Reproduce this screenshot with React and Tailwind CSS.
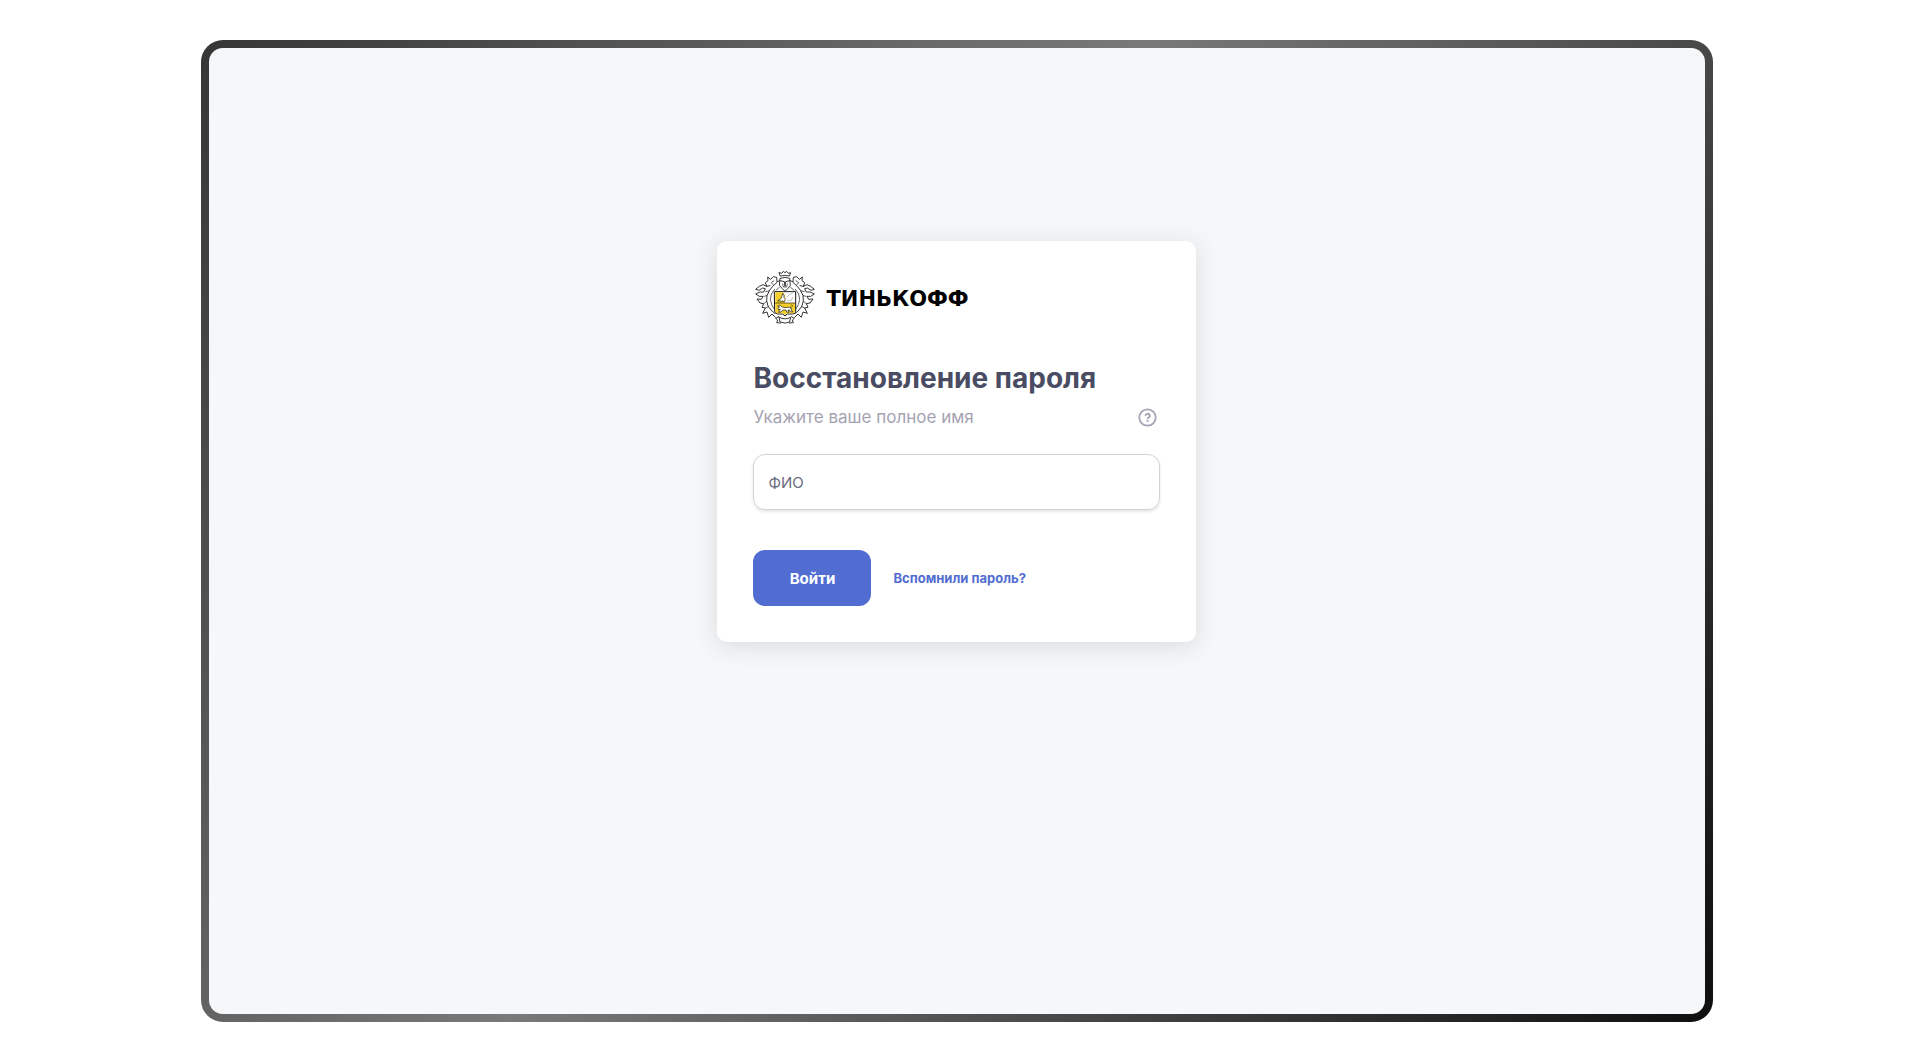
const Crest = () => (
  <svg
    viewBox="45 30 183 162"
    className="h-[54px] w-[61px]"
    fill="none"
    stroke="#161616"
    strokeWidth="2.6"
    strokeLinejoin="round"
    strokeLinecap="round"
    aria-hidden="true"
  >
    <defs>
      {/* left half of the mantling, mirrored for the right half */}
      <g id="mantling">
        <path d="M118 62 111 66 110 52 100 50 92 58 83 51 84 62 76 68 80 79 90 77" />
        <path d="M80 79 69 74 58 79 47 88 57 91 68 84 76 86 71 96 60 96 47 102 58 109 69 109 64 118 51 117 60 129 71 131 66 142 76 144 68 160 81 156 86 172 96 162 106 172" />
        <path d="M110 68 98 79 88 92 81 107 80 122 84 138 93 150 104 160" />
        <path d="M102 62 94 68 99 74M104 88 94 102 91 118 95 134 102 146" strokeWidth="2" />
        <path d="M80 107 72 109M80 124 71 131M85 140 76 144M88 92 77 95" strokeWidth="2" />
      </g>
    </defs>
    <use href="#mantling" />
    <use href="#mantling" transform="matrix(-1 0 0 1 270 0)" />
    {/* crown */}
    <path d="M118 38 125 40 130 34 135 38 140 34 145 40 152 38 148 48 Q135 44 122 48Z" fill="#fff" />
    {/* helmet */}
    <path d="M121 55 Q135 49 149 55 L151 77 143 86 135 94 127 86 119 77Z" fill="#fff" />
    <path d="M121 62 133 65 135 79 137 65 149 62" />
    <path d="M128 72 130 81 140 81 142 72M118 82 108 91M152 82 162 91" strokeWidth="2" />
    {/* shield */}
    <path
      d="M104 95H167V154Q167 162 158 162H142L135 168 128 162H113Q104 162 104 154Z"
      fill="#fff"
      strokeWidth="3"
    />
    <path d="M106 97H128L135 105V129H106Z" fill="#f5d02c" stroke="none" />
    <path d="M106 129H165V153Q165 160 157 160H141L135 165 129 160H114Q106 160 106 153Z" fill="#f5d02c" stroke="none" />
    <path d="M106 129H165" strokeWidth="2" />
    <path d="M114 122 122 117 126 108 128 100 132 106 132 113 136 117 134 123Z" fill="#fff" strokeWidth="2" />
    <path d="M140 112 149 103 156 101M142 122 154 121 158 112" stroke="#9a9a9a" strokeWidth="1.8" />
    {/* lion in the lower field */}
    <path
      d="M114 138 120 135 126 141 138 143 147 141 153 144 154 150 158 156 151 155 148 150 144 150 147 157 140 156 138 150 129 150 123 156 116 157 119 152 121 147 115 150 114 145 118 142Z"
      fill="#fff"
      strokeWidth="2"
    />
    <path d="M152 143 158 138 154 134" strokeWidth="2" />
    {/* ribbon */}
    <path d="M116 170 107 175 113 180 110 188 122 189" fill="#fff" />
    <path d="M154 170 163 175 157 180 160 188 148 189" fill="#fff" />
    <path d="M118 172Q135 181 152 172L149 186Q135 193 121 186Z" fill="#fff" />
  </svg>
);

const HelpIcon = () => (
  <svg viewBox="0 0 22 22" className="h-[22px] w-[22px]" fill="none" stroke="currentColor" aria-hidden="true">
    <circle cx="11.5" cy="11.5" r="8.2" strokeWidth="1.8" />
    <path d="M9.4 9.8a2.2 2 0 1 1 3.3 1.7c-.8.45-1.1.8-1.1 1.5" strokeWidth="1.8" />
    <circle cx="11.6" cy="14.9" r="1.1" fill="currentColor" stroke="none" />
  </svg>
);

const RecoveryForm = () => (
  <form
    className="w-full max-w-[479px] rounded-[10px] bg-white px-9 pt-[29px] pb-9 shadow-[0_4px_24px_rgba(60,60,60,0.14)]"
    onSubmit={(e) => e.preventDefault()}
  >
    <div className="flex items-center gap-2.5 pl-0.5">
      <Crest />
      <span className="pt-1 font-['DejaVu_Sans',sans-serif] text-[21px] leading-6 font-bold text-black">
        ТИНЬКОФФ
      </span>
    </div>
    <h1 className="mt-9 text-[28px] leading-9 font-bold text-[#494c62]">
      Восстановление пароля
    </h1>
    <div className="mt-[9px] flex items-center justify-between pr-0.5">
      <label htmlFor="fullname" className="text-[17px] leading-6 text-[#a5a3b1]">
        Укажите ваше полное имя
      </label>
      <button type="button" aria-label="Помощь" className="text-[#a5a3b5]">
        <HelpIcon />
      </button>
    </div>
    <input
      id="fullname"
      type="text"
      placeholder="ФИО"
      className="mt-[25px] block h-14 w-full rounded-xl border border-[#d3d3d5] px-[14px] text-[15px] text-[#494c62] shadow-[0_2px_3px_rgba(0,0,0,0.1)] outline-none placeholder:text-[#6b6c80]"
    />
    <div className="mt-10 flex items-center gap-[22px]">
      <button type="submit" className="h-14 w-[118px] rounded-xl bg-[#516dd2] pt-0.5 text-[15px] font-bold text-white">
        Войти
      </button>
      <a href="#login" className="pt-0.5 text-[13px] font-bold text-[#516dd2]">
        Вспомнили пароль?
      </a>
    </div>
  </form>
);

export default function App() {
  return (
    <div className="flex min-h-screen justify-center bg-white py-10 font-['Inter',sans-serif]">
      <div className="flex w-[79%] rounded-[22px] bg-[linear-gradient(123deg,#363636_0%,#797979_44%,#0f0f0f_100%)] p-2">
        <main className="flex flex-1 items-start justify-center rounded-[14px] bg-[#f5f7f9] pt-[193px]">
          <RecoveryForm />
        </main>
      </div>
    </div>
  );
}
